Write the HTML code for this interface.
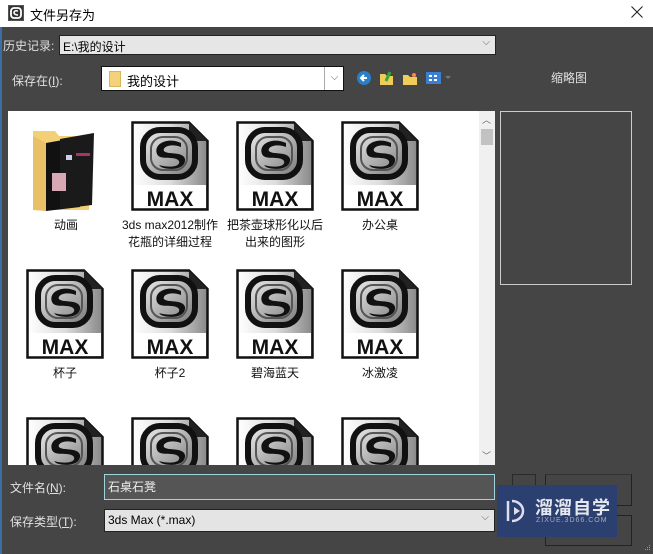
<!DOCTYPE html>
<html><head><meta charset="utf-8"><style>
*{margin:0;padding:0;box-sizing:border-box}
body{width:653px;height:554px;overflow:hidden;background:#454545;font-family:"Liberation Sans","Noto Sans CJK SC",sans-serif;position:relative;font-size:12px;color:#ddd}
.abs{position:absolute}
.title{left:0;top:0;width:653px;height:27px;background:#fff;color:#000}
.lbl{color:#e0e0e0;font-size:12px}
.list{left:8px;top:111px;width:487px;height:354px;background:#fff;overflow:hidden}
.cap{position:absolute;width:110px;text-align:center;color:#111;font-size:12px;line-height:17px}
</style></head><body>
<div class="abs" style="left:0;top:0;width:2px;height:554px;background:#3a6ea5"></div>
<div class="abs title">
 <svg class="abs" style="left:8px;top:5px" width="16" height="16" viewBox="0 0 16 16"><rect x="0.5" y="0.5" width="15" height="15" fill="#333" stroke="#555"/><rect x="3" y="3" width="10" height="10" rx="3" fill="none" stroke="#fff" stroke-width="1.8"/><path d="M10 6 Q6 5 6 8 Q7 10 10 10" fill="none" stroke="#fff" stroke-width="1.5"/></svg>
 <div class="abs" style="left:30px;top:5px;font-size:13px">文件另存为</div>
 <svg class="abs" style="left:631px;top:6px" width="12" height="12"><path d="M0.5 0.5L11.5 11.5M11.5 0.5L0.5 11.5" stroke="#222" stroke-width="1.1"/></svg>
</div>
<div class="abs lbl" style="left:3px;top:37px">历史记录:</div>
<div class="abs" style="left:59px;top:35px;width:437px;height:20px;background:#e6e6e6;border:1px solid #222;color:#000;padding:2px 3px;font-size:12px">E:\我的设计<span style="position:absolute;right:5px;top:1px;color:#666;font-size:10px">⌵</span></div>
<div class="abs lbl" style="left:12px;top:72px">保存在(<u>I</u>):</div>
<div class="abs" style="left:101px;top:66px;width:243px;height:25px;background:#fff;border:1px solid #111;color:#000">
 <div class="abs" style="left:7px;top:4px;width:12px;height:16px;background:#f3d27a;border:1px solid #d8b55a"></div>
 <div class="abs" style="left:25px;top:4px;font-size:13px">我的设计</div>
 <div class="abs" style="left:222px;top:0;width:20px;height:23px;border-left:1px solid #aaa;text-align:center;color:#666;font-size:10px;line-height:22px">⌵</div>
</div>
<svg class="abs" style="left:356px;top:69px" width="100" height="18" viewBox="0 0 100 18">
 <circle cx="8" cy="9" r="7" fill="#2a7fc9"/><path d="M11 9H5M8 6L5 9L8 12" stroke="#fff" stroke-width="2" fill="none"/>
 <path d="M24 5h5l2 2h6v9H24z" fill="#f0cc5a"/><path d="M30 12 L34 3" stroke="#3a3" stroke-width="3"/>
 <path d="M47 6h5l2 2h7v8H47z" fill="#f0cc5a"/><circle cx="58" cy="6" r="2" fill="#f84"/>
 <rect x="70" y="3" width="15" height="12" fill="#3a7fd0"/><path d="M73 6h3v2h-3zM78 6h3v2h-3zM73 10h3v2h-3zM78 10h3v2h-3z" fill="#fff"/>
 <path d="M89 7l3 3 3-3z" fill="#777"/>
</svg>
<div class="abs lbl" style="left:551px;top:69px;font-size:12px">缩略图</div>
<div class="abs" style="left:500px;top:111px;width:132px;height:174px;border:1px solid #ccc"></div>

<div class="abs list">
 <div class="abs" style="right:0;top:0;width:16px;height:354px;background:#f0f0f0"></div>
 <div class="abs" style="right:2px;top:18px;width:12px;height:16px;background:#c2c2c2"></div>
 <div class="abs" style="right:4px;top:2px;color:#666;font-size:9px">︿</div>
 <div class="abs" style="right:4px;top:338px;color:#666;font-size:9px">﹀</div>
 <svg class="abs" style="left:22px;top:12px" width="70" height="90" viewBox="0 0 70 90">
  <path d="M3 8h22l4 5h30v74H3z" fill="#f3cf76"/>
  <path d="M16 20 L50 14 L50 84 L16 88z" fill="#111"/>
  <path d="M30 16 L64 10 L62 82 L30 86z" fill="#1a1a1a"/>
  <rect x="22" y="50" width="14" height="18" fill="#d8a8b4"/>
  <rect x="36" y="32" width="6" height="5" fill="#cce"/><rect x="46" y="30" width="14" height="3" fill="#a36"/>
  <path d="M3 13 L16 20 L16 88 L3 87z" fill="#e8c065"/>
 </svg>
 <div class="cap" style="left:3px;top:106px">动画</div>
</div>
<div class="abs lbl" style="left:10px;top:479px">文件名(<u>N</u>):</div>
<div class="abs" style="left:104px;top:474px;width:391px;height:26px;background:#555;border:1px solid #9fd4dc;color:#eee;padding:3px 3px;font-size:12px">石桌石凳</div>
<div class="abs lbl" style="left:10px;top:513px">保存类型(<u>T</u>):</div>
<div class="abs" style="left:104px;top:509px;width:391px;height:23px;background:#e4e4e4;border:1px solid #222;color:#000;padding:3px 3px;font-size:12px">3ds Max (*.max)<span style="position:absolute;right:5px;top:2px;color:#666;font-size:10px">⌵</span></div>
<div class="abs" style="left:512px;top:474px;width:24px;height:60px;border:1px solid #2a2a2a"></div>
<div class="abs" style="left:545px;top:474px;width:87px;height:32px;border:1px solid #222;border-top-color:#333"></div>
<div class="abs" style="left:545px;top:515px;width:87px;height:31px;border:1px solid #222"></div>
<div class="abs" style="left:497px;top:485px;width:120px;height:52px;background:#2b4070">
 <svg class="abs" style="left:7px;top:13px" width="24" height="26" viewBox="0 0 24 26"><path d="M4 3 V23" stroke="#dde" stroke-width="2.5"/><path d="M8 3 A11 10 0 1 1 8 23" stroke="#dde" stroke-width="2.5" fill="none"/><path d="M10 9 L16 13 L10 17z" fill="#dde"/></svg>
 <div class="abs" style="left:38px;top:9px;color:#e6e8f0;font-size:18px;font-weight:bold;letter-spacing:1px">溜溜自学</div>
 <div class="abs" style="left:39px;top:32px;color:#aab;font-size:7px;letter-spacing:1px">ZIXUE.3D66.COM</div>
</div>
<svg class="abs" style="left:642px;top:544px" width="10" height="10"><g fill="#999"><rect x="7" y="1" width="1" height="1"/><rect x="5" y="3" width="1" height="1"/><rect x="7" y="3" width="1" height="1"/><rect x="3" y="5" width="1" height="1"/><rect x="5" y="5" width="1" height="1"/><rect x="7" y="5" width="1" height="1"/></g></svg>

<svg width="0" height="0" style="position:absolute"><defs>
<linearGradient id="g" x1="0" x2="1" y1="0" y2="0"><stop offset="0" stop-color="#fff"/><stop offset="0.5" stop-color="#ddd"/><stop offset="1" stop-color="#888"/></linearGradient>
<linearGradient id="g2" x1="0" x2="1" y1="0" y2="1"><stop offset="0" stop-color="#eee"/><stop offset="1" stop-color="#777"/></linearGradient>
<g id="mx">
<path d="M1.5 1.5H58L76.5 20V88.5H1.5Z" fill="url(#g)" stroke="#111" stroke-width="2.5"/>
<path d="M58 1.5V20H76.5Z" fill="#222"/>
<rect x="3" y="64" width="72" height="23" fill="#fff"/>
<rect x="12" y="9" width="52" height="47" rx="17" fill="url(#g2)" stroke="#111" stroke-width="6"/>
<rect x="20" y="16" width="36" height="33" rx="12" fill="none" stroke="#555" stroke-width="2"/>
<path d="M50 22 C38 16 22 22 26 33 C29 40 44 34 48 40 C50 46 38 47 28 44 L30 46 C40 50 55 48 54 38 C52 30 36 34 33 30 C31 26 40 22 50 26Z" fill="#111"/>
</g></defs></svg>
<div class="abs" style="left:0;top:0">
 <svg class="abs" style="left:131px;top:121px" width="78" height="90"><use href="#mx"/><text x="39" y="85" text-anchor="middle" font-family="Liberation Sans" font-weight="bold" font-size="21" fill="#111">MAX</text></svg>
 <svg class="abs" style="left:236px;top:121px" width="78" height="90"><use href="#mx"/><text x="39" y="85" text-anchor="middle" font-family="Liberation Sans" font-weight="bold" font-size="21" fill="#111">MAX</text></svg>
 <svg class="abs" style="left:341px;top:121px" width="78" height="90"><use href="#mx"/><text x="39" y="85" text-anchor="middle" font-family="Liberation Sans" font-weight="bold" font-size="21" fill="#111">MAX</text></svg>
 <div class="cap" style="left:115px;top:217px;color:#111">3ds max2012制作<br>花瓶的详细过程</div>
 <div class="cap" style="left:220px;top:217px">把茶壶球形化以后<br>出来的图形</div>
 <div class="cap" style="left:325px;top:217px">办公桌</div>
 <svg class="abs" style="left:26px;top:269px" width="78" height="90"><use href="#mx"/><text x="39" y="85" text-anchor="middle" font-family="Liberation Sans" font-weight="bold" font-size="21" fill="#111">MAX</text></svg>
 <svg class="abs" style="left:131px;top:269px" width="78" height="90"><use href="#mx"/><text x="39" y="85" text-anchor="middle" font-family="Liberation Sans" font-weight="bold" font-size="21" fill="#111">MAX</text></svg>
 <svg class="abs" style="left:236px;top:269px" width="78" height="90"><use href="#mx"/><text x="39" y="85" text-anchor="middle" font-family="Liberation Sans" font-weight="bold" font-size="21" fill="#111">MAX</text></svg>
 <svg class="abs" style="left:341px;top:269px" width="78" height="90"><use href="#mx"/><text x="39" y="85" text-anchor="middle" font-family="Liberation Sans" font-weight="bold" font-size="21" fill="#111">MAX</text></svg>
 <div class="cap" style="left:10px;top:365px">杯子</div>
 <div class="cap" style="left:115px;top:365px">杯子2</div>
 <div class="cap" style="left:220px;top:365px">碧海蓝天</div>
 <div class="cap" style="left:325px;top:365px">冰激凌</div>
 <div class="abs" style="left:8px;top:417px;width:470px;height:48px;overflow:hidden">
  <svg class="abs" style="left:18px;top:0" width="78" height="90"><use href="#mx"/></svg>
  <svg class="abs" style="left:123px;top:0" width="78" height="90"><use href="#mx"/></svg>
  <svg class="abs" style="left:228px;top:0" width="78" height="90"><use href="#mx"/></svg>
  <svg class="abs" style="left:333px;top:0" width="78" height="90"><use href="#mx"/></svg>
 </div>
</div>
</body></html>
